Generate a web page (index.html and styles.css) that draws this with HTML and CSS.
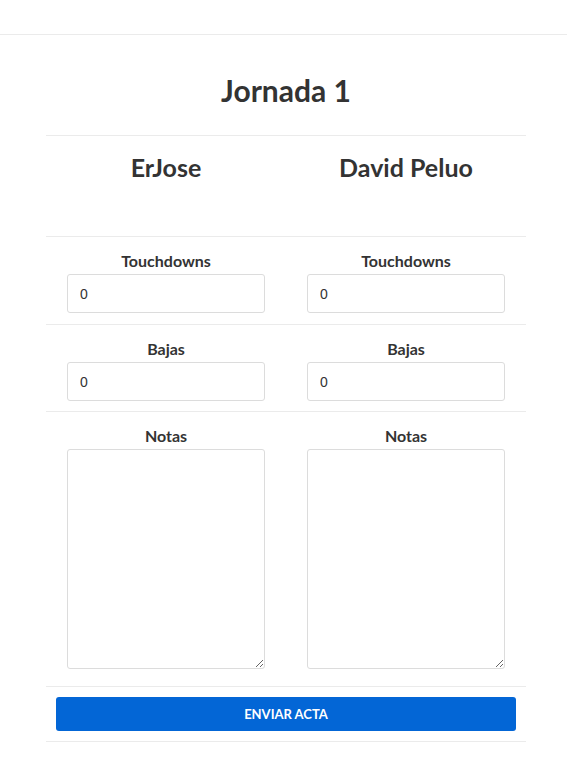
FILE: index.html
```html
<!DOCTYPE html>
<html lang="es">
<head>
<meta charset="utf-8">
<title>Jornada 1</title>
<link rel="stylesheet" href="styles.css">
</head>
<body>
<header class="topbar"></header>
<main class="container">
  <h1 class="title">Jornada 1</h1>
  <form class="acta">
    <div class="row row-names">
      <div class="cell"><h2 class="name">ErJose</h2></div>
      <div class="cell"><h2 class="name">David Peluo</h2></div>
    </div>
    <div class="row row-first">
      <div class="cell">
        <label class="label">Touchdowns</label>
        <input class="field" type="text" value="0">
      </div>
      <div class="cell">
        <label class="label">Touchdowns</label>
        <input class="field" type="text" value="0">
      </div>
    </div>
    <div class="row">
      <div class="cell">
        <label class="label">Bajas</label>
        <input class="field" type="text" value="0">
      </div>
      <div class="cell">
        <label class="label">Bajas</label>
        <input class="field" type="text" value="0">
      </div>
    </div>
    <div class="row row-notes">
      <div class="cell">
        <label class="label">Notas</label>
        <textarea class="notes"></textarea>
      </div>
      <div class="cell">
        <label class="label">Notas</label>
        <textarea class="notes"></textarea>
      </div>
    </div>
    <div class="row row-submit">
      <button class="submit" type="button">ENVIAR ACTA</button>
    </div>
  </form>
</main>
</body>
</html>
```

FILE: styles.css
```css
* { box-sizing: border-box; }

body {
  margin: 0;
  background: #ffffff;
  color: #333333;
  font-family: Lato, "Open Sans", sans-serif;
}

.topbar {
  height: 35px;
  border-bottom: 1px solid #ebebeb;
}

.container {
  width: 480px;
  margin-left: 46px;
}

.title {
  margin: 0;
  padding: 37px 0 0;
  height: 100px;
  text-align: center;
  font-size: 30px;
  line-height: 36px;
  font-weight: 700;
}

.acta {
  display: flex;
  flex-direction: column;
}

.row {
  display: grid;
  grid-template-columns: 1fr 1fr;
  border-top: 1px solid #ebebeb;
}

.cell {
  display: flex;
  flex-direction: column;
  align-items: center;
  padding: 14px 21px 10px;
}

.row-first .cell {
  padding-bottom: 11px;
}

.row-names .cell {
  height: 100px;
  padding-top: 16px;
}

.name {
  margin: 0;
  font-size: 25px;
  line-height: 30px;
  font-weight: 700;
}

.label {
  display: block;
  font-size: 16px;
  line-height: 20px;
  font-weight: 700;
  margin-bottom: 3px;
}

.field {
  display: block;
  width: 198px;
  height: 39px;
  padding: 0 12px;
  border: 1px solid #dcdcdc;
  border-radius: 3px;
  font-family: "Liberation Sans", Arial, sans-serif;
  font-size: 14px;
  color: #333333;
  background: #ffffff;
}

.row-notes .cell {
  padding-bottom: 17px;
}

.notes {
  display: block;
  width: 198px;
  height: 220px;
  border: 1px solid #dcdcdc;
  border-radius: 3px;
  background: #ffffff;
  resize: both;
}

.row-submit {
  display: block;
  padding: 10px 10px 10px;
  border-bottom: 1px solid #ebebeb;
}

.submit {
  display: block;
  width: 100%;
  height: 34px;
  border: none;
  border-radius: 3px;
  background: #0366d6;
  color: #ffffff;
  font-family: Lato, "Open Sans", sans-serif;
  font-size: 13px;
  font-weight: 700;
  letter-spacing: 0;
}
```
